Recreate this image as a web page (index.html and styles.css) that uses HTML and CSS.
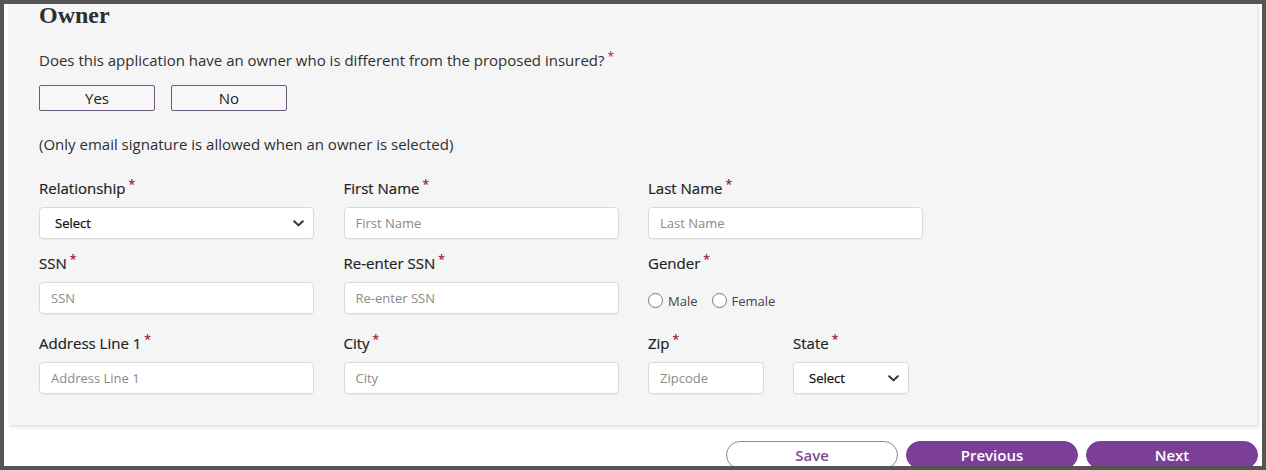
FILE: index.html
```html
<!DOCTYPE html>
<html lang="en">
<head>
<meta charset="utf-8">
<title>Owner</title>
<link rel="stylesheet" href="styles.css">
</head>
<body>
<div class="screen">
  <section class="card">
    <h2 class="title">Owner</h2>
    <p class="question">Does this application have an owner who is different from the proposed insured?<span class="req">*</span></p>
    <div class="choice">
      <button class="choice-btn" type="button">Yes</button>
      <button class="choice-btn" type="button">No</button>
    </div>
    <p class="note">(Only email signature is allowed when an owner is selected)</p>
    <div class="grid">
      <div class="field">
        <label class="label">Relationship<span class="req">*</span></label>
        <div class="select"><span>Select</span><svg class="chev" width="11" height="7" viewBox="0 0 11 7"><path d="M1.2 1.2l4.3 4.2 4.3-4.2" fill="none" stroke="#333" stroke-width="2" stroke-linecap="round" stroke-linejoin="round"/></svg></div>
      </div>
      <div class="field">
        <label class="label">First Name<span class="req">*</span></label>
        <input class="input" placeholder="First Name">
      </div>
      <div class="field">
        <label class="label">Last Name<span class="req">*</span></label>
        <input class="input" placeholder="Last Name">
      </div>
      <div class="field">
        <label class="label">SSN<span class="req">*</span></label>
        <input class="input" placeholder="SSN">
      </div>
      <div class="field">
        <label class="label">Re-enter SSN<span class="req">*</span></label>
        <input class="input" placeholder="Re-enter SSN">
      </div>
      <div class="field">
        <label class="label">Gender<span class="req">*</span></label>
        <div class="radios">
          <span class="radio"><span class="dot"></span>Male</span>
          <span class="radio"><span class="dot"></span>Female</span>
        </div>
      </div>
      <div class="field">
        <label class="label">Address Line 1<span class="req">*</span></label>
        <input class="input" placeholder="Address Line 1">
      </div>
      <div class="field">
        <label class="label">City<span class="req">*</span></label>
        <input class="input" placeholder="City">
      </div>
      <div class="pair">
        <div class="field">
          <label class="label">Zip<span class="req">*</span></label>
          <input class="input" placeholder="Zipcode">
        </div>
        <div class="field">
          <label class="label">State<span class="req">*</span></label>
          <div class="select"><span>Select</span><svg class="chev" width="11" height="7" viewBox="0 0 11 7"><path d="M1.2 1.2l4.3 4.2 4.3-4.2" fill="none" stroke="#333" stroke-width="2" stroke-linecap="round" stroke-linejoin="round"/></svg></div>
        </div>
      </div>
    </div>
  </section>
  <div class="actions">
    <button class="btn btn-outline" type="button">Save</button>
    <button class="btn btn-primary" type="button">Previous</button>
    <button class="btn btn-primary" type="button">Next</button>
  </div>
</div>
</body>
</html>
```
FILE: styles.css
```css
* { box-sizing: border-box; }
html, body { margin: 0; padding: 0; }
body {
  background: #555;
  font-family: "Open Sans", "Liberation Sans", sans-serif;
  color: #333;
}
.screen {
  width: 1266px;
  height: 470px;
  border: 4px solid #555;
  background: #fff;
  overflow: hidden;
}
.card {
  margin: 0 4px 0 6px;
  background: #f5f5f5;
  border-right: 1px solid #e4e4e4;
  box-shadow: 0 2px 4px rgba(0, 0, 0, 0.14);
  padding: 0 0 31px 29px;
}
.title {
  margin: -1px 0 0;
  font-family: "Liberation Serif", "DejaVu Serif", serif;
  font-weight: 700;
  font-size: 24px;
  line-height: 24px;
  color: #2e2e2e;
}
.question {
  margin: 23px 0 0;
  font-size: 15px;
  line-height: 20px;
  color: #2f2f2f;
}
.req {
  color: #c8102e;
  font-size: 12px;
  position: relative;
  top: -5px;
  margin-left: 3px;
  line-height: 0;
}
.choice {
  display: flex;
  gap: 16px;
  margin-top: 15px;
}
.choice-btn {
  width: 116px;
  height: 26px;
  border: 1px solid #6e5a7c;
  border-radius: 2px;
  background: #f7f6f8;
  font-family: "Open Sans", "Liberation Sans", sans-serif;
  font-size: 15px;
  font-weight: 400;
  color: #222;
  padding: 0;
}
.note {
  margin: 23px 0 0;
  font-size: 15px;
  line-height: 20px;
  color: #2f2f2f;
}
.grid {
  display: grid;
  grid-template-columns: 275px 275px 275px;
  column-gap: 29.5px;
  row-gap: 14px;
  margin-top: 24px;
}
.field {
  display: flex;
  flex-direction: column;
}
.label {
  font-size: 15px;
  line-height: 20px;
  font-weight: 400;
  color: #222;
  margin-bottom: 9px;
  -webkit-text-stroke: 0.2px #222;
}
.input, .select {
  height: 32px;
  border: 1px solid #dadada;
  border-radius: 4px;
  background: #fff;
  box-shadow: 0 1px 1px rgba(0, 0, 0, 0.04);
}
.input {
  padding: 0 11px;
  font-family: "Open Sans", "Liberation Sans", sans-serif;
  font-size: 13px;
  color: #333;
  outline: none;
}
.input::placeholder { color: #8a8a8a; }
.select {
  display: flex;
  align-items: center;
  justify-content: space-between;
  padding: 0 9px 0 15px;
  font-size: 13px;
  font-weight: 400;
  color: #111;
  -webkit-text-stroke: 0.25px #111;
}
.chev { display: block; }
.radios {
  height: 37px;
  display: flex;
  align-items: center;
  gap: 14px;
}
.radio {
  display: flex;
  align-items: center;
  gap: 5px;
  font-size: 13px;
  color: #444;
}
.dot {
  width: 15px;
  height: 15px;
  border: 1px solid #777;
  border-radius: 50%;
  background: #fff;
}
.pair {
  display: grid;
  grid-template-columns: 116px 116px;
  column-gap: 29px;
}
.actions {
  display: flex;
  justify-content: flex-end;
  gap: 8px;
  margin: 16px 4px 0 0;
}
.btn {
  width: 172px;
  height: 28px;
  border-radius: 14px;
  font-family: "Open Sans", "Liberation Sans", sans-serif;
  font-size: 15px;
  font-weight: 600;
  padding: 0;
}
.btn-outline {
  background: #fff;
  border: 1px solid #8c8c8c;
  color: #7a4b94;
}
.btn-primary {
  background: #7b3f98;
  border: 1px solid #7b3f98;
  color: #fff;
}
```
